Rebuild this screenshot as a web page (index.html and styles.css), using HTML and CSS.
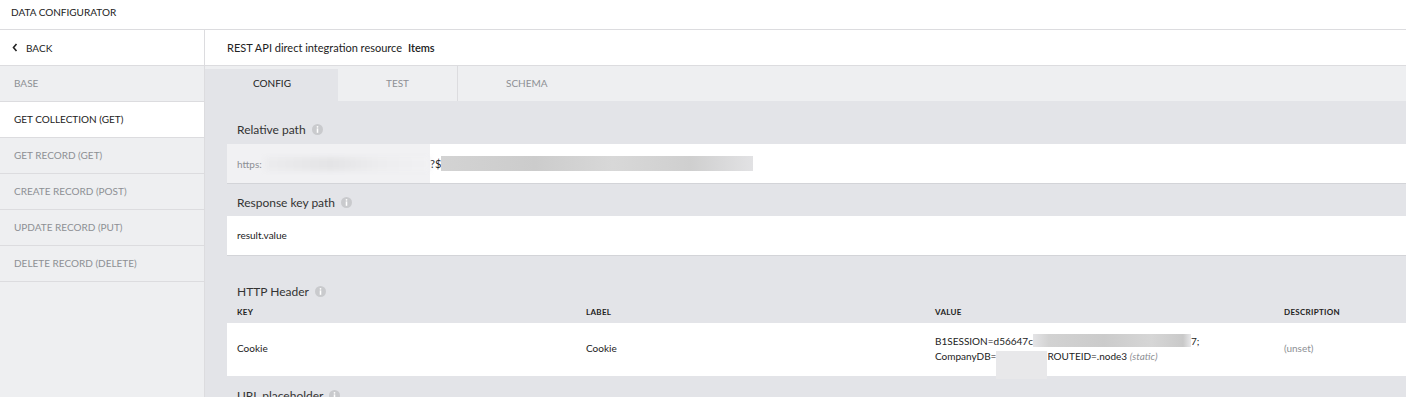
FILE: index.html
```html
<!DOCTYPE html>
<html lang="en">
<head>
  <meta charset="UTF-8">
  <title>Data Configurator</title>
  <link rel="stylesheet" href="styles.css">
</head>
<body>
  <header class="topbar">DATA CONFIGURATOR</header>
  <div class="layout">
    <!-- Sidebar -->
    <aside class="sidebar">
      <div class="back">
        <svg width="6" height="9" viewBox="0 0 6 9"><polyline points="4.5,1 1.5,4.5 4.5,8" fill="none" stroke="#222" stroke-width="1.6"/></svg>
        <span>BACK</span>
      </div>
      <div class="nav-item">BASE</div>
      <div class="nav-item active">GET COLLECTION (GET)</div>
      <div class="nav-item">GET RECORD (GET)</div>
      <div class="nav-item">CREATE RECORD (POST)</div>
      <div class="nav-item">UPDATE RECORD (PUT)</div>
      <div class="nav-item">DELETE RECORD (DELETE)</div>
    </aside>

    <!-- Main -->
    <main class="main">
      <div class="resource">REST API direct integration resource <b>Items</b></div>
      <div class="tabs">
        <div class="tab active">CONFIG</div>
        <div class="tab">TEST</div>
        <div class="tab">SCHEMA</div>
      </div>
      <div class="content">
        <div class="field-label first">Relative path <svg class="info" width="11" height="11" viewBox="0 0 10 10"><circle cx="5" cy="5" r="5" fill="#c9cacd"/><rect x="4.3" y="4" width="1.4" height="4" fill="#fff"/><circle cx="5" cy="2.6" r="0.8" fill="#fff"/></svg></div>
        <div class="box path-box">
          <div class="redact-light"><span class="muted">https:</span><span class="smudge"></span></div>
          <span class="qs">?$</span><span class="bar bar-long"></span>
        </div>

        <div class="field-label">Response key path <svg class="info" width="11" height="11" viewBox="0 0 10 10"><circle cx="5" cy="5" r="5" fill="#c9cacd"/><rect x="4.3" y="4" width="1.4" height="4" fill="#fff"/><circle cx="5" cy="2.6" r="0.8" fill="#fff"/></svg></div>
        <div class="box text-box">result.value</div>

        <div class="field-label spaced">HTTP Header <svg class="info" width="11" height="11" viewBox="0 0 10 10"><circle cx="5" cy="5" r="5" fill="#c9cacd"/><rect x="4.3" y="4" width="1.4" height="4" fill="#fff"/><circle cx="5" cy="2.6" r="0.8" fill="#fff"/></svg></div>
        <div class="cols head">
          <div>KEY</div>
          <div>LABEL</div>
          <div>VALUE</div>
          <div>DESCRIPTION</div>
        </div>
        <div class="cols row">
          <div>Cookie</div>
          <div>Cookie</div>
          <div class="value">
            <div>B1SESSION=d56647c<span class="bar bar-session"></span>7;</div>
            <div>CompanyDB=<span class="bar bar-db"></span>ROUTEID=.node3 <i>(static)</i></div>
          </div>
          <div class="unset">(unset)</div>
        </div>

        <div class="field-label last">URL placeholder <svg class="info" width="11" height="11" viewBox="0 0 10 10"><circle cx="5" cy="5" r="5" fill="#c9cacd"/><rect x="4.3" y="4" width="1.4" height="4" fill="#fff"/><circle cx="5" cy="2.6" r="0.8" fill="#fff"/></svg></div>
      </div>
    </main>
  </div>
</body>
</html>
```

FILE: styles.css
```css
body {
  margin: 0;
  font-family: Lato, "Liberation Sans", sans-serif;
  font-size: 11px;
  color: #222;
  background: #fff;
  overflow: hidden;
}
.topbar {
  height: 29px;
  line-height: 25px;
  padding-left: 11px;
  font-size: 10px;
  border-bottom: 1px solid #dcdcdf;
}
.layout {
  display: flex;
  height: 367px;
}
.sidebar {
  width: 204px;
  flex-shrink: 0;
  background: #eeeff1;
  border-right: 1px solid #dcdcdf;
}
.back {
  height: 35px;
  display: flex;
  align-items: center;
  gap: 8px;
  padding-left: 12px;
  background: #fff;
  font-size: 10px;
  border-bottom: 1px solid #dcdcdf;
}
.nav-item {
  height: 35px;
  line-height: 34px;
  padding-left: 14px;
  font-size: 10px;
  color: #8d8f94;
  border-bottom: 1px solid #dcdcdf;
}
.nav-item.active {
  background: #fff;
  color: #222;
}
.main {
  flex: 1;
  min-width: 0;
  overflow: hidden;
}
.resource {
  height: 35px;
  line-height: 35px;
  padding-left: 22px;
  border-bottom: 1px solid #dcdcdf;
}
.resource b {
  font-weight: 600;
  margin-left: 3px;
}
.tabs {
  display: flex;
  height: 35px;
  background: #eeeff1;
}
.tab {
  padding: 0 48px;
  line-height: 35px;
  font-size: 10px;
  color: #8d8f94;
}
.tab:last-child {
  border-left: 1px solid #dcdcdf;
}
.tab.active {
  margin-top: 3px;
  line-height: 29px;
  width: 37px;
  text-align: center;
  background: #e3e4e8;
  color: #222;
}
.content {
  background: #e3e4e8;
  padding-left: 22px;
  height: 300px;
}
.field-label {
  padding: 12px 10px 7px;
  line-height: 13px;
  font-size: 12px;
  color: #333;
  display: flex;
  align-items: center;
  gap: 6px;
}
.field-label.first {
  padding-top: 22px;
  padding-bottom: 8px;
}
.field-label.spaced {
  padding-top: 29px;
}
.field-label.last {
  padding-top: 13px;
}
.info {
  flex-shrink: 0;
}
.box {
  background: #fff;
  border-bottom: 1px solid #d3d4d8;
}
.path-box {
  height: 39px;
  display: flex;
  align-items: center;
}
.redact-light {
  width: 193px;
  height: 100%;
  padding-left: 10px;
  display: flex;
  align-items: center;
  background: #f1f1f3;
}
.muted {
  color: #8d8f94;
  font-size: 10px;
}
.smudge {
  flex: 1;
  height: 14px;
  margin-left: 3px;
  background: linear-gradient(90deg, #ececee, #e4e4e6 40%, #ededef 70%, #f1f1f3);
  filter: blur(2px);
}
.bar {
  display: inline-block;
  background: linear-gradient(90deg, #d3d3d3, #cccccc 30%, #d8d8d8 55%, #cfcfcf 80%, #e2e2e4);
  vertical-align: middle;
}
.bar-long {
  width: 312px;
  height: 15px;
}
.text-box {
  height: 39px;
  line-height: 39px;
  padding-left: 10px;
  font-size: 10px;
}
.cols {
  display: grid;
  grid-template-columns: 349px 349px 349px 349px;
  padding-left: 10px;
}
.head {
  font-size: 8px;
  font-weight: 700;
  letter-spacing: 0.3px;
  line-height: 13px;
  padding-top: 1px;
  padding-bottom: 4px;
}
.row {
  background: #fff;
  height: 53px;
  align-items: center;
  font-size: 10px;
}
.row > div {
  margin-top: -3px;
}
.row > .value {
  margin-top: 5px;
  line-height: 15px;
}
.bar-session {
  width: 158px;
  height: 13px;
  vertical-align: -2px;
  background: linear-gradient(90deg, #e4e4e6, #d2d2d2 10%, #cbcbcb 45%, #d6d6d6 75%, #c9c9c9 95%, #e8e8ea);
}
.bar-db {
  width: 51px;
  height: 28px;
  margin: -7px 0 -8px;
  vertical-align: -11px;
  background: #e8e8ea;
}
.value i {
  color: #8d8f94;
}
.unset {
  color: #8d8f94;
}
```
